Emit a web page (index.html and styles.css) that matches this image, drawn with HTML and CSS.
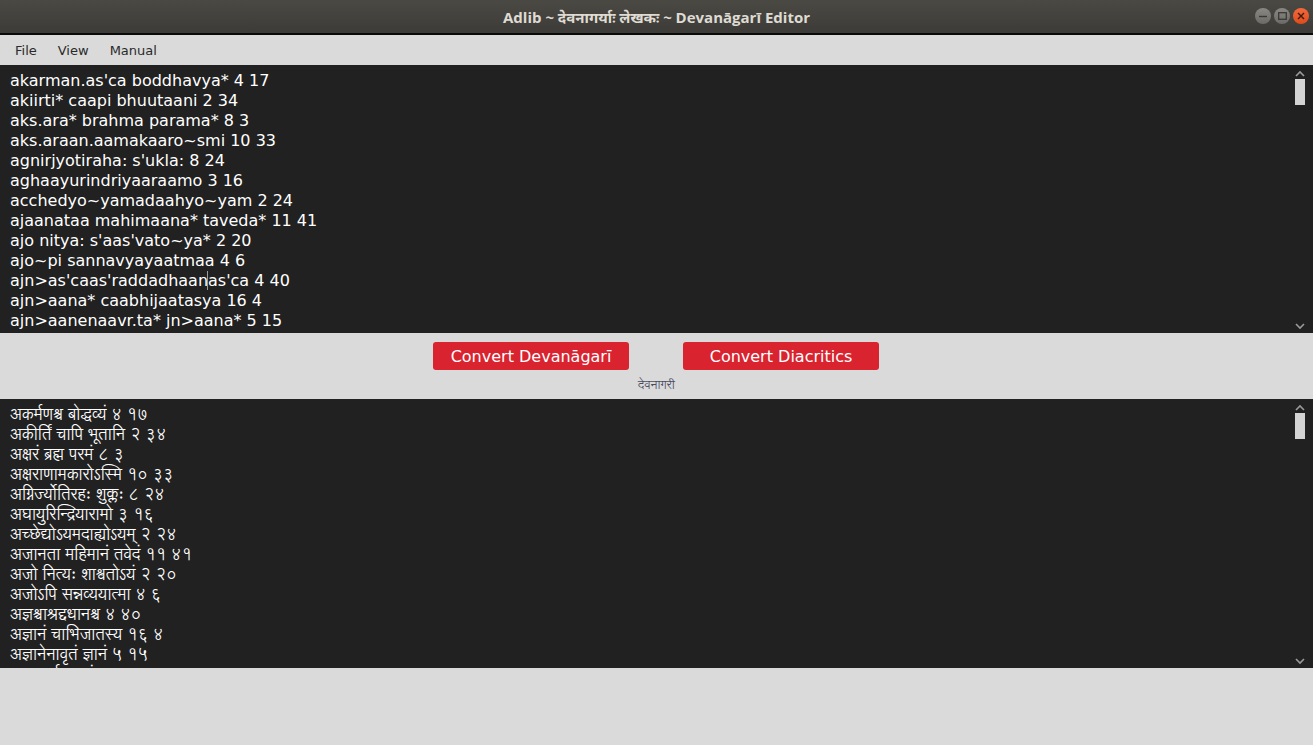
FILE: index.html
```html
<!DOCTYPE html>
<html lang="en">

<head>
  <meta charset="UTF-8">
  <title>Adlib ~ Devanāgarī Editor</title>

  <link rel="stylesheet" href="styles.css">
</head>

<body>
  <div class="window">
    <!-- title bar -->
    <div class="titlebar">
      <span class="title">Adlib ~ देवनागर्याः लेखकः ~ Devanāgarī Editor</span>
      <div class="controls">
        <span class="ctl"><svg width="8" height="8" viewBox="0 0 8 8"><path d="M0 4.5h8" stroke="#3a3935" stroke-width="1.4"/></svg></span>
        <span class="ctl"><svg width="9" height="8" viewBox="0 0 9 8"><rect x="0.7" y="0.7" width="7.6" height="6.6" fill="none" stroke="#3a3935" stroke-width="1.3"/></svg></span>
        <span class="ctl close"><svg width="8" height="8" viewBox="0 0 8 8"><path d="M1 1l6 6M7 1l-6 6" stroke="#3a1a0c" stroke-width="1.4"/></svg></span>
      </div>
    </div>

    <div class="menubar">
      <span>File</span>
      <span>View</span>
      <span>Manual</span>
    </div>

    <!-- input: transliterated text -->
    <div class="editor">
      <div class="lines latin">
        <div>akarman.as'ca boddhavya* 4 17</div>
        <div>akiirti* caapi bhuutaani 2 34</div>
        <div>aks.ara* brahma parama* 8 3</div>
        <div>aks.araan.aamakaaro~smi 10 33</div>
        <div>agnirjyotiraha: s'ukla: 8 24</div>
        <div>aghaayurindriyaaraamo 3 16</div>
        <div>acchedyo~yamadaahyo~yam 2 24</div>
        <div>ajaanataa mahimaana* taveda* 11 41</div>
        <div>ajo nitya: s'aas'vato~ya* 2 20</div>
        <div>ajo~pi sannavyayaatmaa 4 6</div>
        <div>ajn&gt;as'caas'raddadhaan<span class="caret"></span>as'ca 4 40</div>
        <div>ajn&gt;aana* caabhijaatasya 16 4</div>
        <div>ajn&gt;aanenaavr.ta* jn&gt;aana* 5 15</div>
      </div>
      <div class="scrollbar">
        <svg class="arrow" width="10" height="7" viewBox="0 0 10 7"><path d="M1 6l4-4 4 4" fill="none" stroke="#9a9a9a" stroke-width="1.6"/></svg>
        <div class="thumb"></div>
        <div class="track"></div>
        <svg class="arrow" width="10" height="7" viewBox="0 0 10 7"><path d="M1 1l4 4 4-4" fill="none" stroke="#9a9a9a" stroke-width="1.6"/></svg>
      </div>
    </div>

    <div class="actions">
      <div class="buttons">
        <button class="btn">Convert Devanāgarī</button>
        <button class="btn">Convert Diacritics</button>
      </div>
      <div class="label">देवनागरी</div>
    </div>

    <!-- output: devanagari -->
    <div class="editor lower">
      <div class="lines deva">
        <div>अकर्मणश्च बोद्धव्यं ४ १७</div>
        <div>अकीर्तिं चापि भूतानि २ ३४</div>
        <div>अक्षरं ब्रह्म परमं ८ ३</div>
        <div>अक्षराणामकारोऽस्मि १० ३३</div>
        <div>अग्निर्ज्योतिरहः शुक्लः ८ २४</div>
        <div>अघायुरिन्द्रियारामो ३ १६</div>
        <div>अच्छेद्योऽयमदाह्योऽयम् २ २४</div>
        <div>अजानता महिमानं तवेदं ११ ४१</div>
        <div>अजो नित्यः शाश्वतोऽयं २ २०</div>
        <div>अजोऽपि सन्नव्ययात्मा ४ ६</div>
        <div>अज्ञश्चाश्रद्दधानश्च ४ ४०</div>
        <div>अज्ञानं चाभिजातस्य १६ ४</div>
        <div>अज्ञानेनावृतं ज्ञानं ५ १५</div>
        <div>अतत्त्वार्थवदल्पं च १८ २२</div>
      </div>
      <div class="scrollbar">
        <svg class="arrow" width="10" height="7" viewBox="0 0 10 7"><path d="M1 6l4-4 4 4" fill="none" stroke="#9a9a9a" stroke-width="1.6"/></svg>
        <div class="thumb"></div>
        <div class="track"></div>
        <svg class="arrow" width="10" height="7" viewBox="0 0 10 7"><path d="M1 1l4 4 4-4" fill="none" stroke="#9a9a9a" stroke-width="1.6"/></svg>
      </div>
    </div>

    <div class="footer"></div>
  </div>
</body>

</html>
```

FILE: styles.css
```css
html,
body {
  margin: 0;
  padding: 0;
  background: #dadada;
}

.window {
  width: 1313px;
  height: 745px;
  display: flex;
  flex-direction: column;
  overflow: hidden;
  font-family: "DejaVu Sans", sans-serif;
}

.titlebar {
  height: 33px;
  flex: none;
  display: flex;
  align-items: center;
  justify-content: center;
  position: relative;
  background: linear-gradient(#4b4944, #3c3b37);
  border-bottom: 2px solid #0a0a0a;
}

.title {
  color: #dfdbd2;
  font-family: "Open Sans", "Noto Sans", "Noto Sans Devanagari", sans-serif;
  font-weight: bold;
  font-size: 15px;
  margin-top: 1px;
}

.controls {
  position: absolute;
  right: 4px;
  top: 8px;
  display: flex;
  gap: 3px;
}

.ctl {
  width: 16px;
  height: 16px;
  border-radius: 50%;
  background: linear-gradient(#8a8883, #6b6a66);
  display: flex;
  align-items: center;
  justify-content: center;
}

.ctl.close {
  background: linear-gradient(#f26a3c, #de4b1c);
}

.menubar {
  height: 30px;
  flex: none;
  display: flex;
  align-items: center;
  padding-left: 15px;
  gap: 21px;
  font-size: 13px;
  color: #2a2a2a;
}

.editor {
  height: 268px;
  flex: none;
  display: flex;
  background: #212121;
}

.editor.lower {
  height: 269px;
}

.lines {
  flex: 1;
  overflow: hidden;
  padding: 6px 10px 0;
  color: #ffffff;
  font-size: 16px;
  line-height: 20px;
  white-space: nowrap;
}

.deva {
  padding-top: 6px;
  font-family: "Lohit Devanagari", "Noto Sans Devanagari", "Noto Sans", sans-serif;
  font-size: 16px;
}

.caret {
  display: inline-block;
  width: 0;
  height: 19px;
  margin-left: -1px;
  vertical-align: -4px;
  border-left: 1px solid #9c9c9c;
}

.scrollbar {
  width: 17px;
  flex: none;
  display: flex;
  flex-direction: column;
  align-items: center;
  padding: 5px 5px 3px 0;
}

.arrow {
  flex: none;
}

.thumb {
  width: 10px;
  height: 26px;
  margin-top: 2px;
  background: #d4d4d4;
}

.track {
  flex: 1;
}

.actions {
  height: 66px;
  flex: none;
  display: flex;
  flex-direction: column;
  align-items: center;
}

.buttons {
  display: flex;
  gap: 54px;
  margin-top: 9px;
  margin-right: 1px;
}

.btn {
  width: 196px;
  height: 28px;
  border: 0;
  border-radius: 3px;
  background: #d9232f;
  color: #ffffff;
  font-family: "DejaVu Sans", sans-serif;
  font-size: 16px;
  padding: 0;
}

.label {
  margin-top: 5px;
  font-family: "Lohit Devanagari", "Noto Sans Devanagari", sans-serif;
  font-size: 12px;
  color: #4a4a60;
}

.footer {
  flex: 1;
}
```
